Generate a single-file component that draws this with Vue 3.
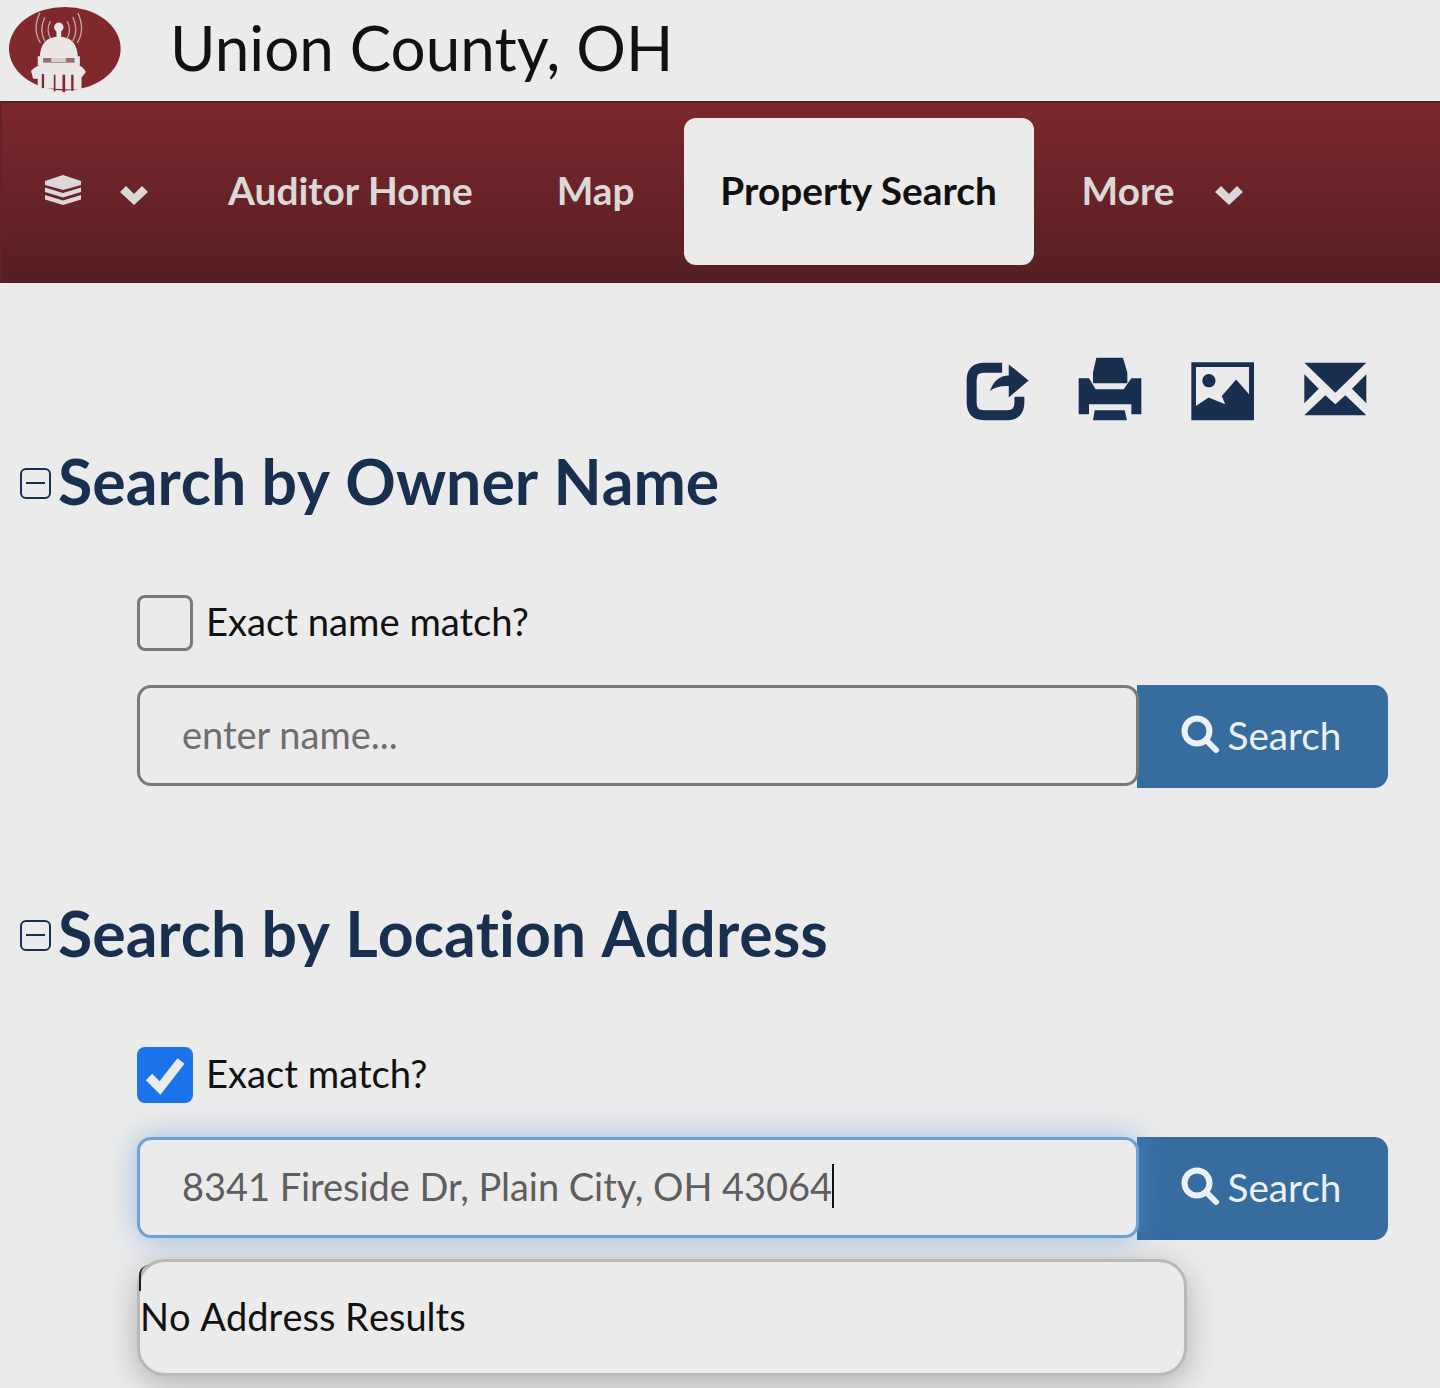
<template>
  <div class="page">
    <header class="topbar">
      <svg class="logo" viewBox="20 12 350 262">
        <ellipse cx="193" cy="142" rx="167" ry="125" fill="#7f292d" />
        <g fill="none" stroke="#c9a0a0" stroke-width="4">
          <path d="M150 60 Q136 85 150 112" />
          <path d="M133 48 Q115 85 133 120" />
          <path d="M118 35 Q95 85 120 125" />
          <path d="M200 60 Q214 85 200 112" />
          <path d="M217 48 Q235 85 217 120" />
          <path d="M232 35 Q255 85 230 125" />
        </g>
        <g fill="#ebe6e6">
          <circle cx="175" cy="78" r="14" />
          <rect x="168" y="88" width="14" height="22" />
          <path d="M118 172 Q118 106 175 106 Q232 106 232 172 Z" />
          <path d="M112 165 H238 V192 H112 Z" />
          <path d="M92 208 Q110 190 135 188 H218 Q245 190 256 212 L243 228 V264 H212 L112 260 V232 L98 232 Z" />
        </g>
        <path d="M128 170 H222 V184 H128 Z" fill="#9c6a6a" />
        <path d="M152 170 H196 V182 H152 Z" fill="#d8cccc" />
        <g fill="#7f292d">
          <rect x="124" y="218" width="7" height="42" />
          <rect x="160" y="220" width="5" height="50" />
          <rect x="186" y="220" width="8" height="52" />
          <rect x="212" y="220" width="7" height="48" />
        </g>
      </svg>
      <h1 class="county">Union County, OH</h1>
    </header>

    <nav class="navbar">
      <div class="nav-item layers">
        <svg class="layers-icon" viewBox="0 0 36 30">
          <path d="M18 0 L36 6 V10 L18 15 L0 10 V6 Z" />
          <path d="M0 12.5 L18 18 L36 12.5 V17 L18 22.5 L0 17 Z" />
          <path d="M0 20 L18 25.5 L36 20 V24.5 L18 30 L0 24.5 Z" />
        </svg>
        <svg class="chevron" viewBox="0 0 28 20"><path d="M6 1 L14 9 L22 1 L28 7 L14 20 L0 7 Z" /></svg>
      </div>
      <a class="nav-item auditor">Auditor Home</a>
      <a class="nav-item map">Map</a>
      <a class="nav-item active">Property Search</a>
      <div class="nav-item more">
        <span>More</span>
        <svg class="chevron" viewBox="0 0 28 20"><path d="M6 1 L14 9 L22 1 L28 7 L14 20 L0 7 Z" /></svg>
      </div>
    </nav>

    <div class="tools">
      <svg class="tool" style="width: 63px" viewBox="46 50 190 198">
        <path d="M155 85 H100 Q63 85 63 122 V190 Q63 228 100 228 H170 Q207 228 207 190 V172" fill="none" stroke="#182f4f" stroke-width="30" />
        <path d="M175 75 L235 123 L175 175 V140 Q140 138 118 155 Q135 108 175 108 Z" fill="#ebebeb" stroke="#ebebeb" stroke-width="20" />
        <path d="M175 75 L235 123 L175 175 V140 Q140 138 118 155 Q135 108 175 108 Z" fill="#182f4f" />
      </svg>
      <svg class="tool" style="width: 64px" viewBox="385 50 192 198">
        <path d="M440 55 H520 L533 100 V132 H430 V100 Z" />
        <path d="M387 117 H418 L438 150 H522 L545 117 H575 V225 H545 V195 H418 V225 H387 Z" />
        <path d="M435 213 H525 L532 243 H430 Z" />
      </svg>
      <svg class="tool" style="width: 63px" viewBox="722 50 190 198">
        <path d="M723 68 H912 V243 H723 Z" />
        <path d="M737 83 H897 V165 L858 120 L815 170 L825 195 L775 175 L737 200 Z" fill="#ebebeb" />
        <circle cx="776" cy="124" r="20" />
      </svg>
      <svg class="tool" style="width: 64px" viewBox="1058 50 192 198">
        <path d="M1062 70 H1248 L1155 160 Z" />
        <path d="M1062 105 L1105 148 L1062 192 Z" />
        <path d="M1248 105 L1205 148 L1248 192 Z" />
        <path d="M1062 228 L1125 168 L1155 195 L1185 168 L1248 228 Z" />
      </svg>
    </div>

    <section class="block owner">
      <div class="block-head">
        <span class="toggle"></span>
        <h2>Search by Owner Name</h2>
      </div>
      <div class="check-row">
        <span class="check"></span>
        <span class="check-label">Exact name match?</span>
      </div>
      <div class="search-row">
        <input class="field" type="text" placeholder="enter name..." />
        <button class="go">
          <svg class="glass" viewBox="0 0 40 40"><circle cx="16" cy="16" r="12.5" /><path d="M25 25 L35 35" /></svg>
          <span>Search</span>
        </button>
      </div>
    </section>

    <section class="block address">
      <div class="block-head">
        <span class="toggle"></span>
        <h2>Search by Location Address</h2>
      </div>
      <div class="check-row">
        <span class="check on">
          <svg viewBox="0 0 56 56"><path d="M12 30 L23 41 L44 14" /></svg>
        </span>
        <span class="check-label">Exact match?</span>
      </div>
      <div class="search-row">
        <div class="field focused"><span class="typed">8341 Fireside Dr, Plain City, OH 43064</span></div>
        <button class="go">
          <svg class="glass" viewBox="0 0 40 40"><circle cx="16" cy="16" r="12.5" /><path d="M25 25 L35 35" /></svg>
          <span>Search</span>
        </button>
        <div class="results">No Address Results</div>
      </div>
    </section>
  </div>
</template>

<script setup>
</script>

<style>
html,
body {
  margin: 0;
  background: #ebebeb;
}
</style>

<style scoped>
.page {
  width: 1440px;
  height: 1388px;
  overflow: hidden;
  background: #ebebeb;
  font-family: Lato, "Liberation Sans", sans-serif;
  color: #111;
}

.topbar {
  height: 101px;
  display: flex;
  align-items: center;
}

.logo {
  width: 117px;
  height: 88px;
  margin-left: 7px;
  margin-top: -4px;
}

.county {
  margin: -7px 0 0 46px;
  font-size: 62px;
  font-weight: 400;
  color: #111;
}

.navbar {
  height: 182px;
  box-sizing: border-box;
  display: flex;
  align-items: center;
  padding-bottom: 6px;
  border-top: 2px solid #5c2024;
  border-left: 2px solid #642126;
  background: linear-gradient(#7c272d, #561f22);
  color: #dcd8d8;
  font-size: 38.8px;
  font-weight: 700;
}

.nav-item {
  display: flex;
  align-items: center;
}

.layers {
  margin-left: 43px;
}

.layers-icon {
  width: 36px;
  height: 30px;
  fill: #dcd8d8;
}

.chevron {
  width: 28px;
  height: 20px;
  margin-left: 39px;
  margin-top: 10px;
  fill: #dcd8d8;
}

.auditor {
  margin-left: 80px;
}

.map {
  margin-left: 84px;
}

.active {
  margin-left: 49px;
  margin-top: 2px;
  width: 350px;
  height: 147px;
  box-sizing: border-box;
  padding-bottom: 2px;
  justify-content: center;
  border-radius: 12px;
  background: #ebebeb;
  color: #111;
}

.more {
  margin-left: 48px;
}

.more .chevron {
  margin-left: 40px;
}

.tools {
  display: flex;
  justify-content: flex-end;
  gap: 49px;
  padding: 73px 73px 0 0;
}

.tool {
  height: 66px;
  fill: #182f4f;
}

.block {
  padding-left: 20px;
}

.owner {
  margin-top: 25px;
}

.address {
  margin-top: 111px;
}

.block-head {
  display: flex;
  align-items: center;
  height: 70px;
}

.block-head h2 {
  margin: -3px 0 0 7px;
  font-size: 62.6px;
  font-weight: 700;
  font-variant-ligatures: none;
  font-kerning: none;
  color: #182f4f;
}

.toggle {
  position: relative;
  width: 31px;
  height: 31px;
  margin-top: 2px;
  box-sizing: border-box;
  border: 2px solid #182f4f;
  border-radius: 6px;
}

.toggle::after {
  content: "";
  position: absolute;
  left: 4px;
  right: 4px;
  top: 12px;
  height: 2px;
  background: #182f4f;
}

.check-row {
  display: flex;
  align-items: center;
  gap: 14px;
  margin: 78px 0 0 117px;
  font-size: 38.2px;
}

.check-label {
  margin-top: -5px;
  margin-left: -1px;
}

.check {
  width: 56px;
  height: 56px;
  box-sizing: border-box;
  border: 3px solid #7a7a7a;
  border-radius: 8px;
}

.check.on {
  border: 0;
  background: #1a73e8;
}

.check svg {
  display: block;
  fill: none;
  stroke: #ebebeb;
  stroke-width: 9;
}

.search-row {
  position: relative;
  display: flex;
  margin: 34px 0 0 117px;
}

.field {
  position: relative;
  z-index: 1;
  width: 1002px;
  height: 101px;
  box-sizing: border-box;
  padding: 0 42px 4px;
  display: flex;
  align-items: center;
  border: 3px solid #7a7a7a;
  border-radius: 14px;
  background: #ebebeb;
  font: 38px Lato, "Liberation Sans", sans-serif;
  color: #5e5e5e;
  outline: none;
}

.field::placeholder {
  color: #6e6e6e;
  opacity: 1;
}

.focused {
  border-color: #6ea2d2;
  box-shadow: 0 0 30px rgba(90, 150, 215, 0.55);
}

.typed {
  border-right: 2px solid #111;
  line-height: 44px;
  letter-spacing: -0.05px;
}

.go {
  width: 251px;
  height: 103px;
  margin-left: -2px;
  padding: 0 3px 4px 0;
  display: flex;
  align-items: center;
  justify-content: center;
  gap: 7px;
  border: 0;
  border-radius: 0 14px 14px 0;
  background: #376c9f;
  color: #ebf1f6;
  font: 38.7px Lato, "Liberation Sans", sans-serif;
}

.glass {
  width: 40px;
  height: 40px;
  fill: none;
  stroke: #ebf1f6;
  stroke-width: 6;
  stroke-linecap: round;
}

.results {
  position: absolute;
  z-index: 2;
  left: 0;
  top: 122px;
  width: 1050px;
  height: 117px;
  box-sizing: border-box;
  padding-bottom: 4px;
  display: flex;
  align-items: center;
  border: 3px solid #b9b9b9;
  border-radius: 28px;
  background: #ebebeb;
  box-shadow: 0 8px 32px rgba(0, 0, 0, 0.25);
  font-size: 38px;
  font-kerning: none;
  color: #111;
}

.results::before {
  content: "";
  position: absolute;
  left: -1px;
  top: 3px;
  width: 8px;
  height: 26px;
  border-left: 2px solid #222;
  border-top-left-radius: 12px;
}
</style>
